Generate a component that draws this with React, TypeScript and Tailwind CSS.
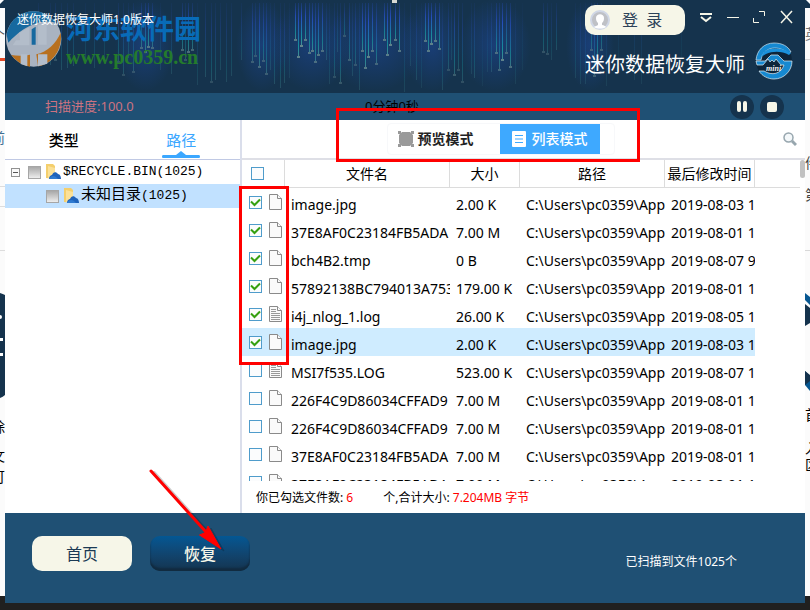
import { ReactNode } from 'react';
import clsx from 'clsx';

// x, end y, opacity
const drops: [number, number, number][] = [
  [38, 62, 0.3], [50, 65, 0.3], [55, 60, 0.4], [61, 70, 0.3], [67, 68, 0.3], [73, 66, 0.3],
  [85, 62, 0.2], [94, 68, 0.25], [104, 58, 0.2], [118, 62, 0.4], [123, 75, 0.35], [128, 58, 0.3],
  [133, 72, 0.4], [141, 48, 0.6], [145, 52, 0.7], [148, 47, 0.8], [152, 48, 0.6], [160, 70, 0.2],
  [171, 74, 0.25], [182, 50, 0.6], [185, 60, 0.4], [188, 52, 0.7], [192, 50, 0.6], [197, 85, 0.2],
  [205, 77, 0.3], [211, 82, 0.35], [215, 80, 0.3], [220, 70, 0.25], [226, 82, 0.25], [231, 76, 0.25],
  [241, 60, 0.25], [252, 62, 0.5], [255, 56, 0.4], [259, 67, 0.65], [263, 61, 0.5], [266, 74, 0.5],
  [270, 70, 0.25], [274, 84, 0.3], [280, 88, 0.3], [284, 83, 0.3], [289, 78, 0.15],
  [295, 40, 0.85], [298, 57, 0.95], [301, 46, 1], [305, 40, 0.85], [309, 53, 0.8], [312, 51, 0.85],
  [315, 62, 0.7], [318, 55, 0.8], [322, 51, 0.7], [326, 60, 0.3], [329, 84, 0.2], [334, 77, 0.35],
  [337, 52, 0.25], [340, 83, 0.45], [344, 36, 0.4], [349, 60, 0.5], [352, 76, 0.25], [355, 65, 0.4],
  [359, 90, 0.25], [362, 51, 0.8], [365, 68, 0.85], [368, 57, 0.95], [372, 51, 0.75], [376, 64, 0.6],
  [384, 40, 0.8], [387, 55, 0.9], [390, 45, 0.95], [395, 40, 0.8], [399, 51, 0.8], [404, 92, 0.2],
  [410, 66, 0.2], [416, 80, 0.25], [421, 88, 0.15], [425, 41, 0.8], [428, 51, 0.85], [431, 44, 0.95],
  [435, 41, 0.8], [439, 49, 0.75], [442, 90, 0.25], [448, 70, 0.35], [451, 60, 0.2], [454, 75, 0.5],
  [458, 70, 0.35], [462, 82, 0.35], [471, 74, 0.2], [474, 78, 0.3], [482, 86, 0.1], [487, 72, 0.15],
  [491, 72, 0.3], [496, 53, 0.7], [499, 70, 0.6], [502, 60, 0.95], [506, 53, 0.6], [510, 67, 0.7],
  [515, 84, 0.15], [522, 70, 0.1], [543, 52, 0.4], [547, 54, 0.35], [551, 60, 0.2], [556, 50, 0.3],
  [575, 78, 0.2], [580, 84, 0.2], [585, 84, 0.2], [591, 50, 0.5], [594, 76, 0.5], [597, 60, 0.7],
  [601, 50, 0.5], [606, 86, 0.15], [618, 70, 0.1], [634, 80, 0.15], [641, 84, 0.15], [681, 60, 0.1],
];

interface FileRow {
  name: string;
  size: string;
  date: string;
  checked?: boolean;
  selected?: boolean;
  text?: boolean;
}

const files: FileRow[] = [
  { name: 'image.jpg', size: '2.00 K', date: '2019-08-03 1', checked: true },
  { name: '37E8AF0C23184FB5ADA', size: '7.00 M', date: '2019-08-01 1', checked: true },
  { name: 'bch4B2.tmp', size: '0 B', date: '2019-08-07 9', checked: true },
  { name: '57892138BC794013A753', size: '179.00 K', date: '2019-08-01 1', checked: true },
  { name: 'i4j_nlog_1.log', size: '26.00 K', date: '2019-08-05 1', checked: true, text: true },
  { name: 'image.jpg', size: '2.00 K', date: '2019-08-03 1', checked: true, selected: true },
  { name: 'MSI7f535.LOG', size: '523.00 K', date: '2019-08-07 1', text: true },
  { name: '226F4C9D86034CFFAD9', size: '7.00 M', date: '2019-08-01 1' },
  { name: '226F4C9D86034CFFAD9', size: '7.00 M', date: '2019-08-01 1' },
  { name: '37E8AF0C23184FB5ADA', size: '7.00 M', date: '2019-08-01 1' },
  { name: '37E8AF0C23184FB5ADA', size: '7.00 M', date: '2019-08-01 1' },
];

const columns = ['文件名', '大小', '路径', '最后修改时间'];

function Rain() {
  return (
    <svg className="absolute inset-0 h-full w-full" viewBox="5 0 800 93" preserveAspectRatio="none">
      <defs>
        <linearGradient id="drop" x1="0" y1="0" x2="0" y2="1">
          <stop offset="0" stopColor="#2448a8" stopOpacity="0.35" />
          <stop offset="0.35" stopColor="#2750c4" />
          <stop offset="0.8" stopColor="#17939c" />
          <stop offset="1" stopColor="#4a8c96" />
        </linearGradient>
        <radialGradient id="haze">
          <stop offset="0" stopColor="#1c4592" stopOpacity="0.6" />
          <stop offset="1" stopColor="#1c4592" stopOpacity="0" />
        </radialGradient>
      </defs>
      {[[145, 30], [262, 26], [312, 40], [375, 50], [432, 30], [495, 36], [590, 24]].map(([x, r]) => (
        <ellipse key={x} cx={x} cy="45" rx={r} ry="46" fill="url(#haze)" />
      ))}
      {drops.map(([x, y, o]) => (
        <g key={x} opacity={o}>
          <rect x={x} y="3" width="1" height={y - 3} fill="url(#drop)" />
          {o > 0.3 && <rect x={x - 1} y={y - 1} width="3" height="2" fill="#62858c" />}
        </g>
      ))}
      <rect x="392" y="0" width="5" height="3" fill="#d8d8d4" />
    </svg>
  );
}

function Watermark() {
  return (
    <div className="absolute top-2 left-0 flex items-start gap-1">
      <svg width="57" height="62" viewBox="15 24 171 186">
        <circle cx="101" cy="117" r="83" fill="#a9b3c1" />
        <path d="M20 105C27 62 60 34 101 34c28 0 51 13 66 34-34-10-68 2-96 20-18 12-33 26-46 40z" fill="#17699f" />
        <path d="M182 98c7 50-26 94-68 101l-5-36c34-8 58-32 73-65z" fill="#b8701f" />
        <path d="M34 165c14 19 34 31 56 35V164c-22 5-40 4-56 1z" fill="#b8701f" />
        <path d="M58 98l30-16v54H38l10-15h12z" fill="#b3bdca" />
        <path d="M95 88l12-8v54H95z" fill="#17699f" />
        <path d="M114 76l26-8v66h-26z" fill="#b3bdca" />
        <path d="M62 163h20v36l-20-7zm52 0h28v28l-28 8z" fill="#b3bdca" />
      </svg>
      <div className="pt-[5px] whitespace-nowrap">
        <p className="text-[27px] leading-8 font-bold text-[#086bb8]">河东软件园</p>
        <p className="font-['Liberation_Serif',serif] text-xl leading-6 font-bold text-[#247b2c]">www.pc0359.cn</p>
      </div>
    </div>
  );
}

function Logo() {
  return (
    <svg width="38" height="38" viewBox="0 0 38 38">
      <circle cx="19" cy="19" r="18" fill="#0d253a" />
      <path d="M1 18C2 8 9 1 19 1c8 0 14 3 17 9l-3 1C23 3 11 5 7 14l-1 4z" fill="#1689d1" stroke="#cfe2ee" strokeWidth=".7" />
      <path d="M12 8c8-3 18-1 24 3l-2 2c-7-4-16-4-23-1-2 1-4 2-5 4 1-4 3-6 6-8z" fill="#1a91dc" />
      <path d="M1 19h9l6-6h7l6 6h8c0 10-8 18-18 18-6 0-12-3-15-8h5c8 5 17 3 20-6h-3l-5-6-2 3-2-2-2 2-2-3-5 6H2z" fill="#1689d1" stroke="#e7f1f5" strokeWidth=".7" />
      <text x="11" y="29" fill="#f4f7f8" fontSize="8" fontStyle="italic" fontWeight="bold" fontFamily="Liberation Serif, serif">mini</text>
    </svg>
  );
}

function Header() {
  return (
    <header className="relative h-[93px] overflow-hidden bg-[#15334d] pr-2">
      <Rain />
      <Watermark />
      <h1 className="absolute top-2 left-3 text-xs leading-6 text-white">迷你数据恢复大师1.0版本</h1>
      <div className="relative flex items-start justify-end pt-[5px]">
        <button className="mr-3 flex h-[30px] w-[100px] items-center rounded-[10px] bg-[#f6f6e8] pl-[5px] text-base text-[#2c4258]">
          <svg width="20" height="20" viewBox="0 0 20 20">
            <circle cx="10" cy="10" r="9" fill="#bfc1c6" stroke="#d0d7e6" strokeWidth="2" />
            <path d="M6 8c0-5 8-5 8 0 0 3-1 4-2 5v2c2 0 3 1 4 2-3 2-9 2-12 0 1-1 3-1 4-2v-2c-1-1-2-2-2-5z" fill="#fff" />
          </svg>
          <span className="ml-3">登&nbsp; 录</span>
        </button>
        <div className="flex items-center gap-3 text-[#f6f6e8]">
          <button aria-label="菜单" className="mt-1">
            <svg width="17" height="16" viewBox="0 0 17 16" fill="none" stroke="currentColor" strokeWidth="2">
              <path d="M3 5h12M4 8l5 4 5-4" />
            </svg>
          </button>
          <button aria-label="最小化" className="mt-1">
            <svg width="14" height="16" viewBox="0 0 14 16" stroke="currentColor">
              <path d="M1 8.500h12" />
            </svg>
          </button>
          <button aria-label="最大化" className="mt-1">
            <svg width="14" height="16" viewBox="0 0 14 16" fill="none" stroke="currentColor">
              <path d="M7 2.500h5.500V7M1.500 9v4.500H7" />
            </svg>
          </button>
          <button aria-label="关闭" className="mt-1 mr-[3px]">
            <svg width="16" height="16" viewBox="0 0 16 16" stroke="currentColor" strokeWidth="1.500">
              <path d="M3 2l11 12M14 2L3 14" />
            </svg>
          </button>
        </div>
      </div>
      <div className="relative mt-[7px] mr-1 flex items-center justify-end gap-[10px]">
        <p className="pt-2 text-xl leading-6 text-white">迷你数据恢复大师</p>
        <Logo />
      </div>
    </header>
  );
}

function FileIcon({ text }: { text?: boolean }) {
  return (
    <svg width="13" height="16" viewBox="0 0 13 16" fill="#fafafa" stroke="#8a8a8a">
      <path d="M.5.5h8l4 4v11H.5z" />
      <path d="M8.500.5v4h4" />
      {text && <path d="M2 3.500h5M2 5.500h5M2 7.500h9M2 9.500h9M2 11.500h9M2 13.500h9" stroke="#999" />}
    </svg>
  );
}

function Box({ label, checked }: { label: string; checked?: boolean }) {
  return (
    <span className="inline-grid place-items-center">
      <input
        type="checkbox"
        aria-label={label}
        defaultChecked={checked}
        className="peer col-start-1 row-start-1 size-[13px] appearance-none border border-[#4f9ccb] bg-[#fbfcfd]"
      />
      <svg
        className="pointer-events-none relative col-start-1 row-start-1 hidden peer-checked:block"
        width="11"
        height="11"
        viewBox="0 0 11 11"
        fill="none"
        stroke="#35a010"
        strokeWidth="2"
      >
        <path d="M1 4.500l3.500 3.500L10 2.500" />
      </svg>
    </span>
  );
}

function FolderIcon() {
  return (
    <svg width="16" height="16" viewBox="0 0 16 16">
      <path d="M1 0h7l2 2v13l-9-1z" fill="#f4cf6d" />
      <path d="M3 2l7 2v11l-7-1z" fill="#fbe198" />
      <path d="M4 15c0-3 2-4 3-4 1-3 4-4 6-1 2 0 3 3 3 5z" fill="#1f63bb" />
      <path d="M4 15c2-4 6-4 9 0z" fill="#2f7bd1" />
    </svg>
  );
}

function TreeRow({ children, label, selected }: { children: ReactNode; label: string; selected?: boolean }) {
  return (
    <li className={clsx('flex h-6 items-center', selected ? 'bg-[#c1e1ff] pl-[41px]' : 'pl-[6px]')}>
      {!selected && (
        <button aria-label="折叠" className="mr-2 flex size-[9px] items-center justify-center border border-[#919191] bg-[#fafafa]">
          <span className="h-px w-[5px] bg-[#555]" />
        </button>
      )}
      <input
        type="checkbox"
        aria-label={label}
        className="mr-1 size-[13px] appearance-none border border-[#a6a6a6] bg-linear-to-b from-[#a8a8a8] to-[#ededed]"
      />
      <FolderIcon />
      <span className="ml-[2px] font-['Liberation_Mono','Noto_Sans_CJK_SC',monospace] text-[13px] text-black">{children}</span>
    </li>
  );
}

function Sidebar() {
  return (
    <aside className="w-[235px] shrink-0">
      <nav className="flex h-10 border-b border-[#c0c9e4] text-[15px] leading-10">
        <button className="flex-1 text-center font-medium text-black">类型</button>
        <button className="relative flex-1 text-center text-[#3ba7ff]">
          路径
          <svg className="absolute inset-x-0 bottom-px mx-auto" width="38" height="8" viewBox="0 0 38 8" fill="#3ba7ff">
            <path d="M0 6.500q0-1.500 1-1.500h13l5-4 5 4h13q1 0 1 1.500T37 8H1q-1 0-1-1.500z" />
          </svg>
        </button>
      </nav>
      <ul>
        <TreeRow label="$RECYCLE.BIN">$RECYCLE.BIN(1025)</TreeRow>
        <TreeRow label="未知目录" selected>
          <span className="text-[15px]">未知目录</span>(1025)
        </TreeRow>
      </ul>
    </aside>
  );
}

function Toolbar() {
  return (
    <div className="relative flex h-10 items-center justify-center border-b-2 border-[#dedfe6]">
      <div className="mr-[46px] flex h-8 items-center rounded border border-[#f7f8fa] pr-[14px] pl-[10px] text-sm">
        <button className="mr-[26px] flex items-center gap-1 font-bold text-[#222]">
          <svg width="16" height="16" viewBox="0 0 16 16" fill="#9a9a9a">
            <path d="M0 0h3v3H0zm13 0h3v3h-3zM0 13h3v3H0zm13 0h3v3h-3z" />
            <path d="M4 1h8l3 3v8l-3 3H4l-3-3V4z" />
          </svg>
          预览模式
        </button>
        <button className="flex h-[30px] w-[100px] items-center justify-center gap-[6px] bg-[#3ea9ff] text-white">
          <svg width="14" height="16" viewBox="0 0 14 16">
            <rect width="14" height="16" rx="1" fill="#fff" />
            <path d="M3 4.500h8M3 8h8M3 11.500h8" stroke="#3ea9ff" />
          </svg>
          <span className="font-medium">列表模式</span>
        </button>
      </div>
      <button aria-label="搜索" className="absolute right-2">
        <svg width="14" height="15" viewBox="0 0 14 15" fill="none" stroke="#97a6ae">
          <circle cx="5.500" cy="5.500" r="4.500" fill="#f4f8fa" strokeWidth="1.500" />
          <path d="M9 9l4 4" strokeWidth="3" />
        </svg>
      </button>
      <div className="pointer-events-none absolute -top-3 left-1/2 z-10 -ml-[188px] h-[54px] w-[304px] border-[3px] border-[#f00]" />
    </div>
  );
}

function FileList() {
  return (
    <div className="relative">
      <div className="h-[321px] overflow-hidden">
        <table className="w-[513px] table-fixed border-separate border-spacing-0 text-left text-black">
          <colgroup>
            <col className="w-[43px]" />
            <col className="w-[165px]" />
            <col className="w-[70px]" />
            <col className="w-[145px]" />
            <col className="w-[90px]" />
          </colgroup>
          <thead>
            <tr className="h-7">
              <th className="border-r border-b border-[#dcdcdc] p-0 pl-[9px] leading-none">
                <Box label="全选" />
              </th>
              {columns.map((c) => (
                <th key={c} className="border-r border-b border-[#dcdcdc] p-0 text-center text-sm font-normal whitespace-nowrap">
                  {c}
                </th>
              ))}
            </tr>
          </thead>
          <tbody className="text-sm">
            {files.map((f, i) => (
              <tr key={i} className={clsx('h-7', f.selected && 'bg-[#cfecff]')}>
                <td className="p-0 pl-[7px]">
                  <div className="flex items-center gap-[7px]">
                    <Box label={f.name} checked={f.checked} />
                    <FileIcon text={f.text} />
                  </div>
                </td>
                <td className="overflow-hidden p-0 pt-[5px] pl-[6px] whitespace-nowrap">{f.name}</td>
                <td className="overflow-hidden p-0 pt-[5px] pl-[6px] whitespace-nowrap">{f.size}</td>
                <td className="overflow-hidden p-0 pt-[5px] pl-[6px] whitespace-nowrap">C:\Users\pc0359\App</td>
                <td className="overflow-hidden p-0 pt-[5px] pl-[6px] whitespace-nowrap">{f.date}</td>
              </tr>
            ))}
          </tbody>
        </table>
      </div>
      <div className="absolute top-[27px] right-[5px] left-[513px] h-px bg-[#dcdcdc]" />
      <div className="absolute top-0 right-0 h-[18px] w-[5px] rounded bg-[#c1c1c1]" />
      <div className="pointer-events-none absolute top-[26px] -left-[3px] z-10 h-[179px] w-[50px] border-[3px] border-[#f00]" />
    </div>
  );
}

function Footer() {
  return (
    <footer className="relative flex h-[90px] items-start bg-[#1f5074] px-[27px] pt-[23px]">
      <button className="h-[35px] w-[100px] rounded-[10px] bg-[#f6f6e8] text-base text-[#1b3a54]">首页</button>
      <button className="ml-[18px] h-[35px] w-[100px] rounded-[10px] bg-linear-to-b from-[#035793] to-[#14344f] text-base font-medium text-[#f6f6e8] shadow-[inset_0_-3px_2px_#112b40]">
        恢复
      </button>
      <p className="mt-[18px] mr-[41px] ml-auto text-xs leading-4 text-white">已扫描到文件1025个</p>
      <svg className="pointer-events-none absolute -top-[48px] left-[140px]" width="84" height="90" viewBox="145 465 84 90">
        <g transform="translate(3 2)" fill="#000" stroke="#000" opacity="0.2">
          <path d="M151 471l55 61" strokeWidth="4" strokeLinecap="round" />
          <path d="M208 526l13 23-21-14 5-2z" />
        </g>
        <path d="M151 471l55 61" stroke="#f00" strokeWidth="3" strokeLinecap="round" />
        <path d="M208 526l13 23-21.500-14 6-2.500z" fill="#f00" stroke="#f00" />
      </svg>
    </footer>
  );
}

// Slivers of the page that lies behind the window
function LeftEdge() {
  return (
    <svg className="w-[5px] shrink-0" height="596" viewBox="0 0 5 596" fontSize="14">
      <rect width="5" height="596" fill="#fbfbfb" />
      <rect width="5" height="8" fill="#15334d" />
      <path d="M0 0h4L0 4z" fill="#fff" />
      <rect y="58" width="5" height="3" fill="#e34a27" />
      <path d="M0 186.500h5M0 206.500h5M0 250.500h5" stroke="#ddd" />
      <path d="M0 293q3 1 5 2v100q-2 2-5 3z" fill="#15334d" />
      <circle cx="0" cy="317" r="2" fill="#fff" />
      <path d="M0 338h3v3H0zm0 15h3v3H0z" fill="#fff" />
      <text x="-9" y="40" fill="#555">个</text>
      <text x="-9" y="143" fill="#3f6f94">前</text>
      <text x="-9" y="432">除</text>
      <text x="-9" y="461">文</text>
      <text x="-9" y="482">可</text>
    </svg>
  );
}

function RightEdge() {
  return (
    <svg className="w-[5px] shrink-0" height="596" viewBox="0 0 5 596" fontSize="14">
      <rect width="5" height="596" fill="#fbfbfb" />
      <rect width="5" height="8" fill="#15334d" />
      <path d="M1 0h4v4z" fill="#fff" />
      <path d="M0 59.500h5M0 250.500h5" stroke="#d8d8d8" />
      <path d="M0 304l5 4v15l-5 3z" fill="#15334d" />
      <path d="M0 293l5 4v8l-5-5z" fill="#075791" />
      <path d="M0 371l5 5v15l-5-6z" fill="#075791" />
      <path d="M0 371l5 4v6l-5 4z" fill="#15334d" />
      <text x="0" y="39" fill="#777">英</text>
      <text x="0" y="168" fill="#444">件</text>
      <text x="0" y="200" fill="#444">第</text>
      <text x="0" y="420">首</text>
      <text x="0" y="453">入</text>
      <text x="0" y="470">区</text>
    </svg>
  );
}

export default function App() {
  return (
    <div className="flex min-h-screen items-start bg-[#202020] font-['Noto_Sans','Noto_Sans_CJK_SC',sans-serif]">
      <LeftEdge />
      <div className="min-w-0 flex-1">
        <Header />
        <div className="flex h-[27px] items-center bg-[#1f5074] pr-[21px] pl-10 text-[13px]">
          <p className="w-[320px] text-[#cd7381]">扫描进度:100.0</p>
          <p className="text-black">0分钟0秒</p>
          <div className="ml-auto flex gap-[6px]">
            <button aria-label="暂停" className="flex size-6 items-center justify-center gap-[2px] rounded-full bg-[#15334d]">
              <span className="h-[11px] w-1 rounded-xs bg-[#f6f6e8]" />
              <span className="h-[11px] w-1 rounded-xs bg-[#f6f6e8]" />
            </button>
            <button aria-label="停止" className="flex size-6 items-center justify-center rounded-full bg-[#15334d]">
              <span className="size-[10px] rounded-xs bg-[#f6f6e8]" />
            </button>
          </div>
        </div>
        <div className="flex bg-white">
          <Sidebar />
          <main className="min-w-0 flex-1 border-l-2 border-[#dadeeb]">
            <Toolbar />
            <FileList />
            <div className="flex h-8 items-center pt-px pl-[14px] text-xs text-black">
              <p>
                你已勾选文件数: <span className="text-[#f00]">6</span>
              </p>
              <p className="ml-[30px]">
                个,合计大小: <span className="text-[#f00]">7.204MB 字节</span>
              </p>
            </div>
          </main>
        </div>
        <Footer />
      </div>
      <RightEdge />
    </div>
  );
}
